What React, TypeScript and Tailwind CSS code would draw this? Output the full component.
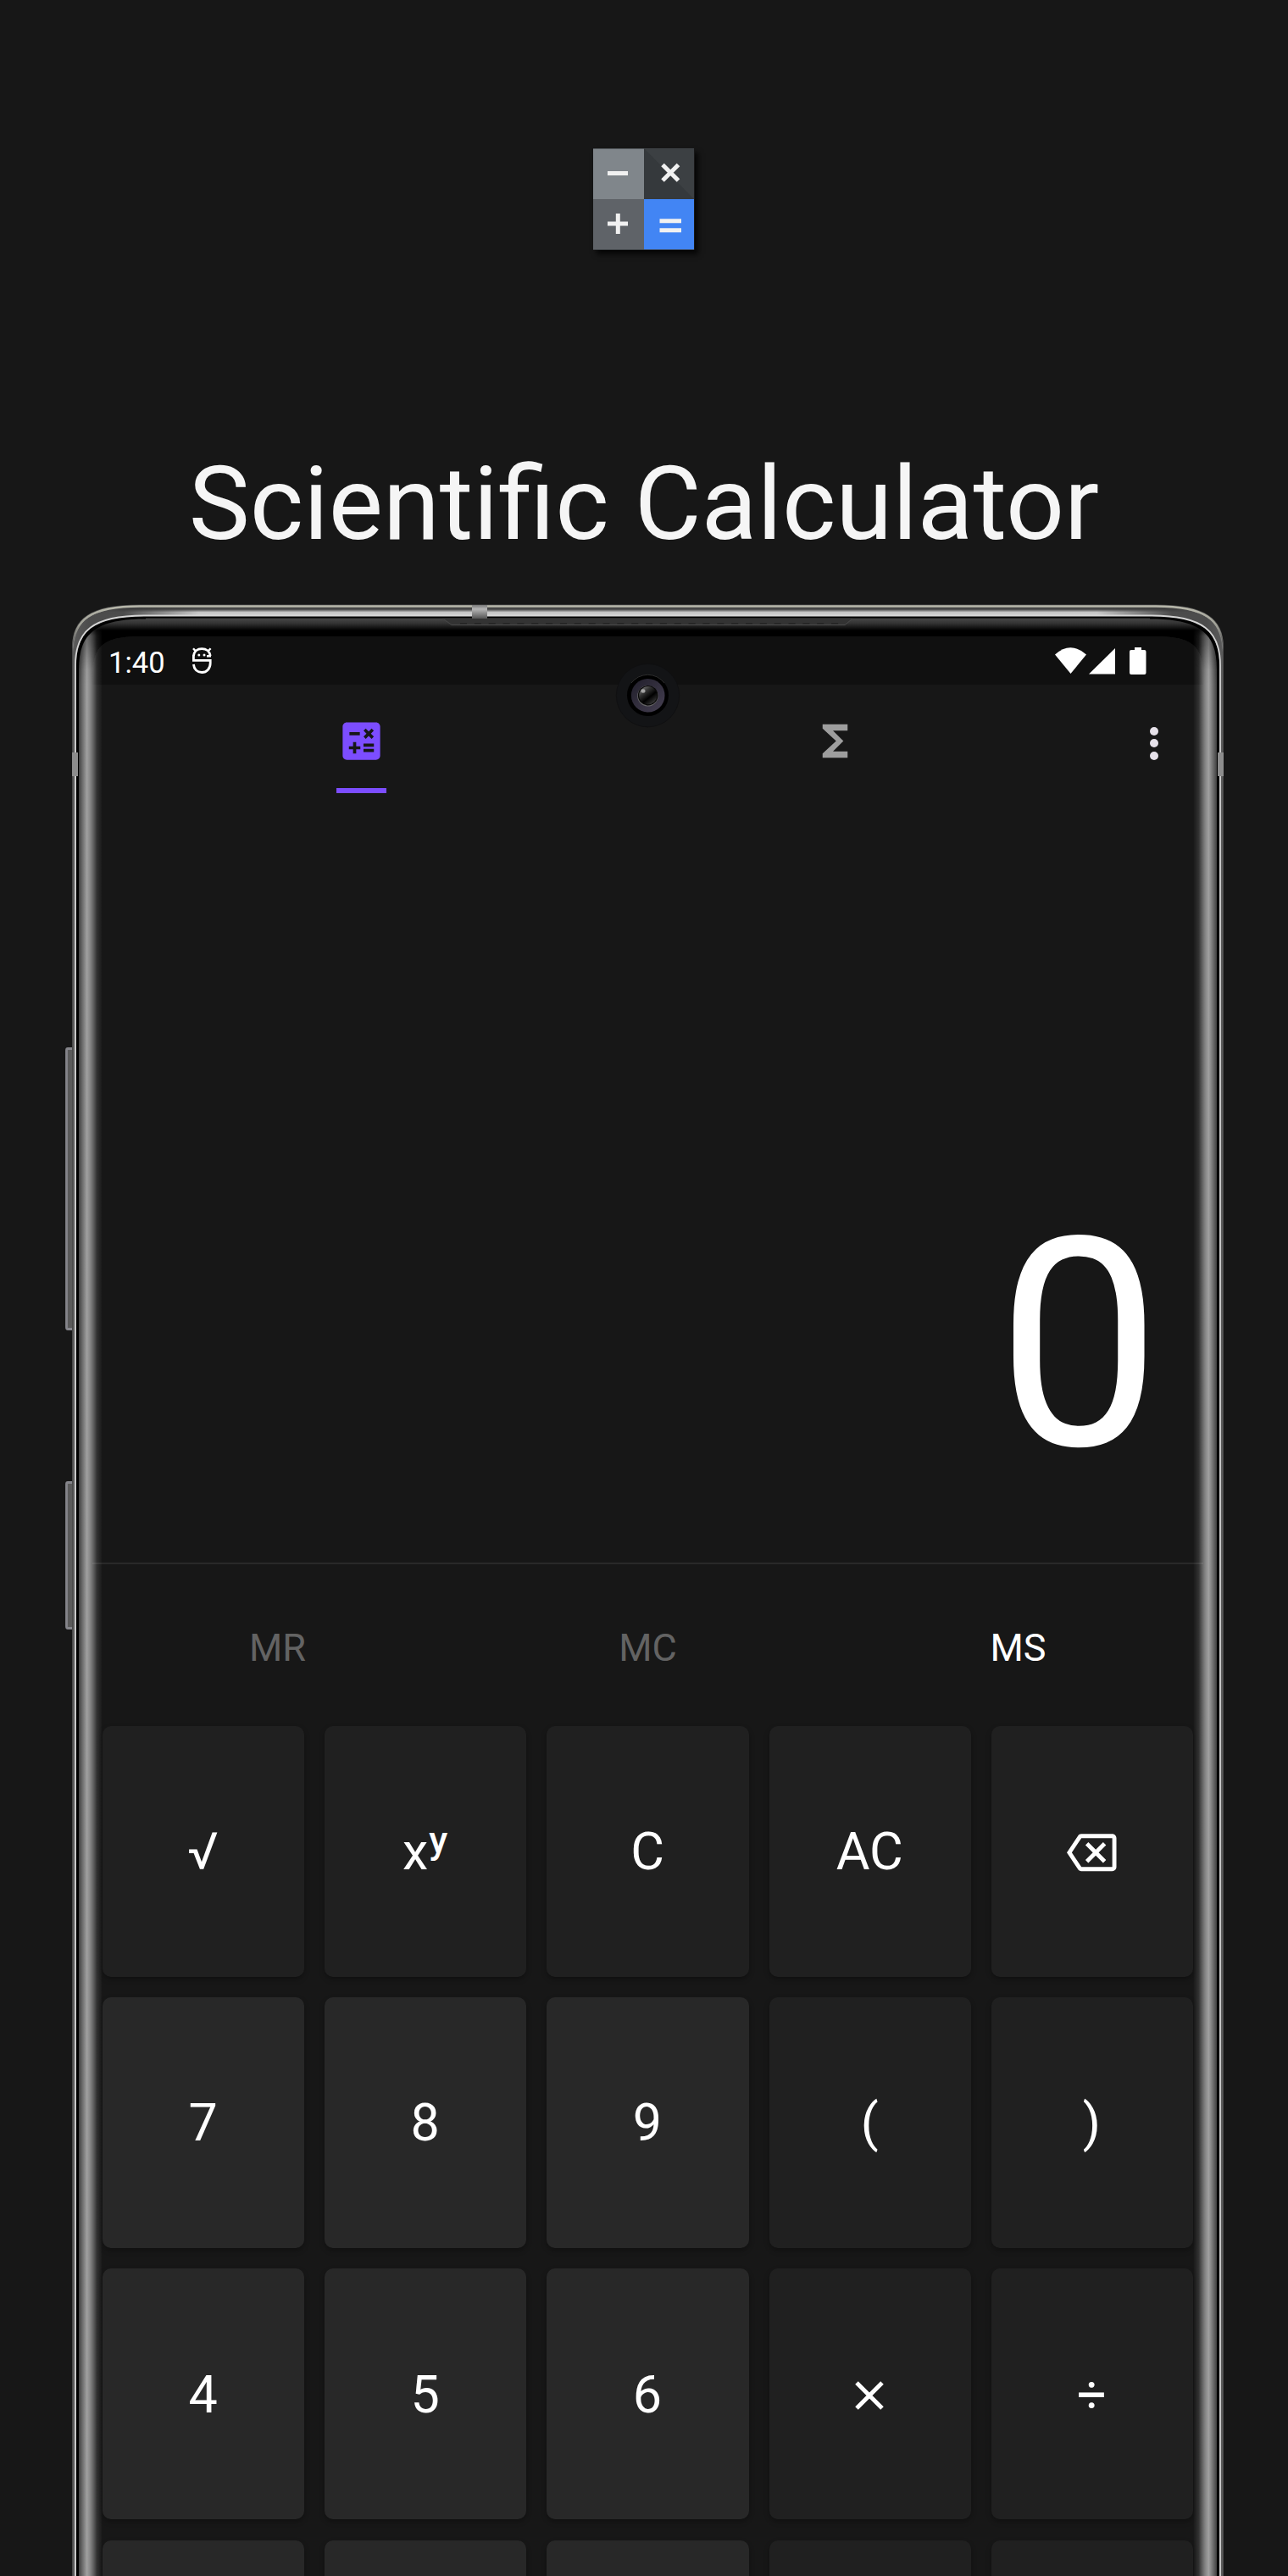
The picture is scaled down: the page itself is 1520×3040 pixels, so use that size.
import { MdCalculate, MdFunctions, MdOutlineBackspace } from "react-icons/md";
import type { ReactNode } from "react";

function AppIcon() {
  return (
    <svg
      width="120"
      height="120"
      viewBox="0 0 120 120"
      className="shadow-[4px_5px_6px_rgba(0,0,0,0.75)]"
    >
      <rect width="60" height="60" fill="#80868b" />
      <rect x="60" width="59" height="60" fill="#3c4043" />
      <path d="M60 0L119 60H60z" fill="#33373a" opacity="0.75" />
      <rect y="60" width="60" height="60" fill="#5f6368" />
      <rect x="60" y="60" width="59" height="60" fill="#4285f4" />
      <path d="M0 .5H119M0 119.5H119" stroke="#3f4347" opacity="0.7" />
      <g stroke="#f1f1f1" strokeWidth="5">
        <path d="M17 29.5H41" />
        <path d="M82 19.5L100.500 38M100.500 19.500L82 38" />
        <path d="M17 89H41M29.300 77V101" />
        <path d="M78.500 85.700H104M78.500 96.700H104" />
      </g>
    </svg>
  );
}

const OUTER = "M85 3060V765C85 730 105 713.500 165 713.500H1364C1424 713.500 1444 730 1444 765V3060z";
const METAL = "M86 3060V770C86 732 107 716.500 166 716.500H1363C1422 716.500 1443 732 1443 770V3060z";
const GASKET = "M90 3060V785C90 745 110 727 170 727H1359C1419 727 1439 745 1439 785V3060z";
const GLASS = "M93 3060V790C93 748 112 730.500 172 730.500H1357C1417 730.500 1436 748 1436 790V3060z";
const SCREEN = "M109 3060V800C109 764 120 751 165 751H1364C1409 751 1420 764 1420 800V3060z";

function EdgeStops() {
  return (
    <>
      <stop offset="0" stopColor="#fff" stopOpacity="0.18" />
      <stop offset="0.18" stopColor="#fff" stopOpacity="0.4" />
      <stop offset="0.34" stopColor="#fff" stopOpacity="0.59" />
      <stop offset="0.46" stopColor="#fff" stopOpacity="0.5" />
      <stop offset="0.6" stopColor="#fff" stopOpacity="0.34" />
      <stop offset="0.76" stopColor="#fff" stopOpacity="0.12" />
      <stop offset="1" stopColor="#fff" stopOpacity="0" />
    </>
  );
}

function SideButton({ y, h }: { y: number; h: number }) {
  return (
    <path
      d={`M86 ${y + 1.5}H80Q78.500 ${y + 1.5} 78.500 ${y + 3.5}V${y + h - 3.5}Q78.500 ${y + h - 1.5} 80 ${y + h - 1.5}H86`}
      fill="#5a5a5a"
      stroke="#85858b"
      strokeWidth="2.800"
    />
  );
}

function DeviceFrame() {
  return (
    <svg
      aria-hidden="true"
      className="absolute top-0 left-0"
      width="1520"
      height="2340"
      viewBox="0 700 1520 2340"
    >
      <defs>
        <linearGradient id="metalTop" gradientUnits="userSpaceOnUse" x1="0" y1="717" x2="0" y2="727">
          <stop offset="0" stopColor="#3c3c3c" />
          <stop offset="0.25" stopColor="#555" />
          <stop offset="0.55" stopColor="#c4c4c4" />
          <stop offset="1" stopColor="#d4d4d4" />
        </linearGradient>
        <linearGradient id="metalCorner" gradientUnits="userSpaceOnUse" x1="85" y1="0" x2="1444" y2="0">
          <stop offset="0" stopColor="#5c5c5c" />
          <stop offset="0.015" stopColor="#4c4c4c" />
          <stop offset="0.045" stopColor="#3e3e3e" stopOpacity="0.9" />
          <stop offset="0.11" stopColor="#3e3e3e" stopOpacity="0" />
          <stop offset="0.89" stopColor="#3e3e3e" stopOpacity="0" />
          <stop offset="0.955" stopColor="#3e3e3e" stopOpacity="0.9" />
          <stop offset="0.985" stopColor="#4c4c4c" />
          <stop offset="1" stopColor="#5c5c5c" />
        </linearGradient>
        <linearGradient id="rimFade" gradientUnits="userSpaceOnUse" x1="0" y1="714" x2="0" y2="768">
          <stop offset="0" stopColor="#b9b9ac" />
          <stop offset="0.45" stopColor="#a0a096" />
          <stop offset="1" stopColor="#777" stopOpacity="0" />
        </linearGradient>
        <linearGradient id="glassTop" gradientUnits="userSpaceOnUse" x1="0" y1="731" x2="0" y2="744">
          <stop offset="0" stopColor="#434343" />
          <stop offset="0.35" stopColor="#333" />
          <stop offset="1" stopColor="#000" />
        </linearGradient>
        <linearGradient id="edgeL" gradientUnits="userSpaceOnUse" x1="93" y1="0" x2="121" y2="0">
          <EdgeStops />
        </linearGradient>
        <linearGradient id="edgeR" gradientUnits="userSpaceOnUse" x1="1436" y1="0" x2="1408" y2="0">
          <EdgeStops />
        </linearGradient>
        <linearGradient id="fadeV" gradientUnits="userSpaceOnUse" x1="0" y1="737" x2="0" y2="790">
          <stop offset="0" stopColor="#fff" stopOpacity="0" />
          <stop offset="0.25" stopColor="#fff" stopOpacity="0.7" />
          <stop offset="1" stopColor="#fff" />
        </linearGradient>
        <mask id="edgeMask" maskUnits="userSpaceOnUse" x="0" y="700" width="1520" height="2340">
          <rect y="700" width="1520" height="2340" fill="url(#fadeV)" />
        </mask>
        <linearGradient id="base" gradientUnits="userSpaceOnUse" x1="0" y1="760" x2="0" y2="808">
          <stop offset="0" stopColor="#000" />
          <stop offset="1" stopColor="#171717" />
        </linearGradient>
        <linearGradient id="key" x1="0" y1="0" x2="0" y2="1">
          <stop offset="0" stopColor="#777" />
          <stop offset="0.3" stopColor="#b5b5b5" />
          <stop offset="1" stopColor="#555" />
        </linearGradient>
        <linearGradient id="iris" x1="0" y1="0" x2="1" y2="1">
          <stop offset="0" stopColor="#201e2a" />
          <stop offset="1" stopColor="#464052" />
        </linearGradient>
        <linearGradient id="lens" x1="0.100" y1="0" x2="0.900" y2="1">
          <stop offset="0" stopColor="#888" />
          <stop offset="0.3" stopColor="#333" />
          <stop offset="0.6" stopColor="#000" />
          <stop offset="0.8" stopColor="#222" />
          <stop offset="1" stopColor="#555" />
        </linearGradient>
        <clipPath id="glassClip">
          <path d={GLASS} />
        </clipPath>
      </defs>

      <SideButton y={1236} h={334} />
      <SideButton y={1748} h={175} />

      <path d={OUTER} fill="#4a4a4a" />
      <path d={METAL} fill="url(#metalTop)" />
      <path d={METAL} fill="url(#metalCorner)" />
      <path
        d="M86 800V767C86 731 107 715.500 165 715.500H1364C1422 715.500 1443 731 1443 767V800"
        fill="none"
        stroke="url(#rimFade)"
        strokeWidth="2.600"
      />
      <path d={GASKET} fill="#000" />
      <path
        d="M89 3060V785C89 745 109 726.500 170 726.500H1359C1420 726.500 1440 745 1440 785V3060"
        fill="none"
        stroke="#d4d4d4"
        strokeWidth="1.800"
      />
      <path d="M172 730.500H1357" stroke="#777" strokeWidth="1.500" />
      <path d={GLASS} fill="url(#base)" />
      <g clipPath="url(#glassClip)">
        <rect x="93" y="730" width="1343" height="21" fill="url(#glassTop)" />
        <path d={SCREEN} fill="#171717" />
        <path d="M109 808V800C109 764 120 751 165 751H1364C1409 751 1420 764 1420 800V808z" fill="#101010" />
        <g mask="url(#edgeMask)">
          <rect x="93" y="730" width="28" height="2320" fill="url(#edgeL)" />
          <rect x="1408" y="730" width="28" height="2320" fill="url(#edgeR)" />
        </g>
      </g>

      <path d="M522 729.500H1006L997 737.500H533z" fill="#333" />
      <path d="M524 731L533 737.500H997L1005 731" fill="none" stroke="#4a4a4a" />
      <path d="M543 735.800H990" stroke="#242424" strokeWidth="1.400" strokeDasharray="8 8.850" />
      <rect x="557" y="714" width="18" height="16" fill="url(#key)" />
      <rect x="85" y="888" width="7" height="28" fill="#8d8d8d" />
      <rect x="1437" y="888" width="7" height="28" fill="#8d8d8d" />

      <circle cx="764.500" cy="820.700" r="37.200" fill="#131416" stroke="#0f0f10" strokeWidth="0.800" />
      <circle cx="764.500" cy="820.500" r="24.500" fill="#000" />
      <path d="M745 806A24.500 24.500 0 0 1 784 806" fill="none" stroke="#3a3a3a" strokeWidth="0.800" />
      <circle cx="764.700" cy="820.700" r="19.800" fill="url(#iris)" />
      <circle cx="764.500" cy="821.300" r="12.300" fill="#666" />
      <circle cx="764.700" cy="820.700" r="11.800" fill="#080808" />
      <circle cx="764.700" cy="820.700" r="10.600" fill="url(#lens)" />
      <ellipse cx="759" cy="815.500" rx="2.600" ry="2.200" fill="#ccc" opacity="0.7" />
    </svg>
  );
}

function DebugIcon() {
  return (
    <svg width="24" height="32" viewBox="0 0 24 32" fill="none" stroke="#fff" strokeWidth="2.800">
      <path d="M1.400 10C2 4.500 6 1.600 11.200 1.600S20.500 4.500 21.200 10" />
      <path d="M1.400 9V15.300H21.200V18.500C21.200 25 17 29.500 11.200 29.500C6 29.500 2 26 1.400 20" />
      <path d="M17 10.300H22M1 1.200L4 4.500M21.600 1.200L18.500 4.500" strokeWidth="2.400" />
      <circle cx="7.800" cy="9" r="1.500" fill="#fff" stroke="none" />
      <circle cx="14" cy="9" r="1.500" fill="#fff" stroke="none" />
    </svg>
  );
}

function StatusBar() {
  return (
    <div className="flex h-[57px] items-center pr-[67px] pl-[19px]">
      <span className="w-[99px] pt-[5px] text-[34.500px] leading-none text-white">1:40</span>
      <DebugIcon />
      <svg className="ml-auto" width="108" height="32" viewBox="0 0 108 32" fill="#fff">
        <path d="M0 8.500Q18.300 -8 37 8.500L18.500 31z" />
        <path d="M71 1V31.500H40z" />
        <path d="M94 0H102V3H105.500Q107.500 3 107.500 5V30Q107.500 32 105.500 32H90Q88 32 88 30V5Q88 3 90 3H94z" />
      </svg>
    </div>
  );
}

function TabBar() {
  return (
    <div className="flex h-[128px] items-start pl-[38px]">
      <div className="flex w-[559px] flex-col items-center pt-[37px]">
        <MdCalculate className="size-[59px] text-[#7c4dff]" />
        <div className="mt-[26px] h-[6px] w-[59px] bg-[#7c4dff]" />
      </div>
      <div className="flex w-[559px] flex-col items-center pt-[37px]">
        <MdFunctions className="size-[59px] text-[#9e9e9e]" />
      </div>
      <div className="flex flex-1 flex-col items-center gap-[4.500px] pt-[49.500px] pl-[39px]">
        <span className="size-[10px] rounded-full bg-[#e6e1e9]" />
        <span className="size-[10px] rounded-full bg-[#e6e1e9]" />
        <span className="size-[10px] rounded-full bg-[#e6e1e9]" />
      </div>
    </div>
  );
}

function TimesIcon() {
  return (
    <svg width="34" height="34" viewBox="0 0 34 34" className="mt-[1px]" stroke="#fff" strokeWidth="5">
      <path d="M2 2L32 32M32 2L2 32" />
    </svg>
  );
}

type KeyDef = { id: string; label: ReactNode; number?: boolean };

const keys: KeyDef[] = [
  { id: "sqrt", label: "√" },
  {
    id: "pow",
    label: (
      <span className="flex">
        x<span className="-mt-[6px] ml-[1px] text-[45px] font-medium">y</span>
      </span>
    ),
  },
  { id: "c", label: "C" },
  { id: "ac", label: "AC" },
  { id: "del", label: <MdOutlineBackspace className="size-[58.500px]" /> },
  { id: "7", label: "7", number: true },
  { id: "8", label: "8", number: true },
  { id: "9", label: "9", number: true },
  { id: "(", label: "(" },
  { id: ")", label: ")" },
  { id: "4", label: "4", number: true },
  { id: "5", label: "5", number: true },
  { id: "6", label: "6", number: true },
  { id: "mul", label: <TimesIcon /> },
  { id: "div", label: "÷" },
  { id: "1", label: "", number: true },
  { id: "2", label: "", number: true },
  { id: "3", label: "", number: true },
  { id: "sub", label: "" },
  { id: "add", label: "" },
];

export default function App() {
  return (
    <div className="flex h-[3040px] w-[1520px] flex-col overflow-hidden bg-[#171717] font-['Roboto',sans-serif] text-white">
      <header className="flex h-[700px] flex-col items-center pt-[175px]">
        <AppIcon />
        <h1 className="mt-[230px] text-[121.200px] leading-[140px] whitespace-nowrap text-[#f5f5f5]">
          Scientific Calculator
        </h1>
      </header>

      <main className="relative h-[2340px] overflow-hidden">
        <DeviceFrame />
        <div className="relative ml-[109px] flex w-[1311px] flex-col pt-[51px]">
          <StatusBar />
          <TabBar />
          <div className="flex h-[908px] items-end justify-end pr-[50px] pb-[56px]">
            <span className="text-[344px] leading-[400px]">0</span>
          </div>
          <div className="h-[2px] bg-white/8" />
          <div className="grid h-[191px] grid-cols-3 items-center pb-[-2px] text-center text-[45px]">
            <span className="pt-[6px] text-[#636363]">MR</span>
            <span className="pt-[6px] text-[#636363]">MC</span>
            <span className="pt-[6px]">MS</span>
          </div>
          <div className="grid grid-cols-5 gap-x-[24.200px] gap-y-[24.700px] px-[12px]">
            {keys.map((k) => (
              <button
                key={k.id}
                className={
                  "flex h-[295.500px] items-center justify-center rounded-[10px] pt-[2px] pr-[1px] text-[61px] leading-none shadow-[0_3px_6px_rgba(0,0,0,0.3)] " +
                  (k.number ? "bg-[#282828]" : "bg-[#202020]")
                }
              >
                {k.label}
              </button>
            ))}
          </div>
        </div>
      </main>
    </div>
  );
}
